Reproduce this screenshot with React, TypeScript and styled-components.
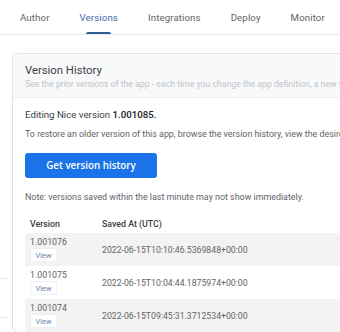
import React from 'react';
import styled, { createGlobalStyle } from 'styled-components';

const GlobalStyle = createGlobalStyle`
  body {
    margin: 0;
    background: #ffffff;
    font-family: Roboto, 'Open Sans', sans-serif;
    color: #202124;
    overflow: hidden;
  }
`;

const Page = styled.div`
  width: 340px;
  height: 332px;
  overflow: hidden;
  position: relative;
`;

const TabBar = styled.div`
  display: flex;
  height: 34px;
  border-bottom: 1px solid #e8eaed;
  padding-left: 20px;
  gap: 30px;
  white-space: nowrap;
`;

const Tab = styled.div<{ active?: boolean }>`
  position: relative;
  font-size: 9.7px;
  letter-spacing: 0.1px;
  line-height: 36px;
  color: ${(p) => (p.active ? '#3b6aa8' : '#5f6368')};

  &::after {
    content: '';
    display: ${(p) => (p.active ? 'block' : 'none')};
    position: absolute;
    left: 6px;
    right: 7px;
    bottom: 0;
    height: 2px;
    border-radius: 2px 2px 0 0;
    background: #2d5d94;
  }
`;

const SideLines = styled.div`
  position: absolute;
  left: 0;
  top: 0;
  width: 8px;
`;

const SideLine = styled.div<{ top: number }>`
  position: absolute;
  left: 0;
  width: 8px;
  top: ${(p) => p.top}px;
  border-top: 1px solid #e8eaed;
`;

const Content = styled.div`
  padding: 18px 0 0 12px;
`;

const Card = styled.div`
  width: 360px;
  border: 1px solid #e3e3e3;
  border-radius: 6px;
  overflow: hidden;
`;

const CardHeader = styled.div`
  background: #f8f9fa;
  padding: 9px 12px 7px;
  border-bottom: 1px solid #eef0f2;
  white-space: nowrap;
`;

const Title = styled.div`
  font-size: 11.3px;
  line-height: 16px;
  color: #3c4043;
`;

const Subtitle = styled.div`
  font-size: 8.7px;
  line-height: 12px;
  color: #c0c4c8;
  margin-top: -1px;
`;

const CardBody = styled.div`
  padding: 10px 12px 0;
  white-space: nowrap;
`;

const Editing = styled.div`
  font-size: 9.7px;
  line-height: 14px;
  color: #3c4043;

  b {
    font-weight: 500;
    color: #202124;
  }
`;

const Muted = styled.div<{ mt: number; size: number }>`
  font-size: ${(p) => p.size}px;
  line-height: 12px;
  color: #5f6368;
  margin-top: ${(p) => p.mt}px;
`;

const PrimaryButton = styled.button`
  display: block;
  margin-top: 13px;
  width: 132px;
  height: 25px;
  border: none;
  border-radius: 3px;
  background: #1a73e8;
  color: #ffffff;
  font-family: 'Open Sans', Roboto, sans-serif;
  font-size: 9.8px;
  font-weight: 600;
  padding: 0;
`;

const Table = styled.div`
  margin-top: 12px;
  width: 340px;
`;

const Row = styled.div<{ shaded?: boolean; head?: boolean }>`
  display: grid;
  grid-template-columns: 72px 1fr;
  align-items: center;
  height: ${(p) => (p.head ? 18 : 33)}px;
  background: ${(p) => (p.shaded ? '#f3f3f3' : 'transparent')};
  padding-left: 5px;
`;

const HeadCell = styled.div`
  font-size: 8.8px;
  font-weight: 500;
  color: #3c4043;
`;

const VersionCell = styled.div`
  display: flex;
  flex-direction: column;
  align-items: flex-start;
  align-self: start;
  padding-top: 3px;
  font-size: 8.8px;
  line-height: 12px;
  color: #5f6368;
`;

const ViewButton = styled.span`
  width: 27px;
  height: 14px;
  line-height: 13px;
  text-align: center;
  background: #ffffff;
  border: 1px solid #eceff1;
  border-radius: 2px;
  font-size: 7.5px;
  color: #6a86ad;
  box-sizing: border-box;
`;

const DateCell = styled.div`
  font-size: 8.7px;
  color: #5f6368;
`;

const tabs = ['Author', 'Versions', 'Integrations', 'Deploy', 'Monitor'];

const versions = [
  { v: '1.001076', at: '2022-06-15T10:10:46.5369848+00:00' },
  { v: '1.001075', at: '2022-06-15T10:04:44.1875974+00:00' },
  { v: '1.001074', at: '2022-06-15T09:45:31.3712534+00:00' },
];

export default function App() {
  return (
    <Page>
      <GlobalStyle />
      <TabBar>
        {tabs.map((t) => (
          <Tab key={t} active={t === 'Versions'}>
            {t}
          </Tab>
        ))}
      </TabBar>
      <SideLines>
        <SideLine top={278} />
        <SideLine top={317} />
      </SideLines>
      <Content>
        <Card>
          <CardHeader>
            <Title>Version History</Title>
            <Subtitle>
              See the prior versions of the app - each time you change the app definition, a new version is saved.
            </Subtitle>
          </CardHeader>
          <CardBody>
            <Editing>
              Editing Nice version <b>1.001085.</b>
            </Editing>
            <Muted mt={6} size={8.9}>
              To restore an older version of this app, browse the version history, view the desired version and restore it.
            </Muted>
            <PrimaryButton>Get version history</PrimaryButton>
            <Muted mt={13} size={8.9}>
              Note: versions saved within the last minute may not show immediately.
            </Muted>
            <Table>
              <Row head>
                <HeadCell>Version</HeadCell>
                <HeadCell>Saved At (UTC)</HeadCell>
              </Row>
              {versions.map((r, i) => (
                <Row key={r.v} shaded={i % 2 === 0}>
                  <VersionCell>
                    {r.v}
                    <ViewButton>View</ViewButton>
                  </VersionCell>
                  <DateCell>{r.at}</DateCell>
                </Row>
              ))}
            </Table>
          </CardBody>
        </Card>
      </Content>
    </Page>
  );
}
